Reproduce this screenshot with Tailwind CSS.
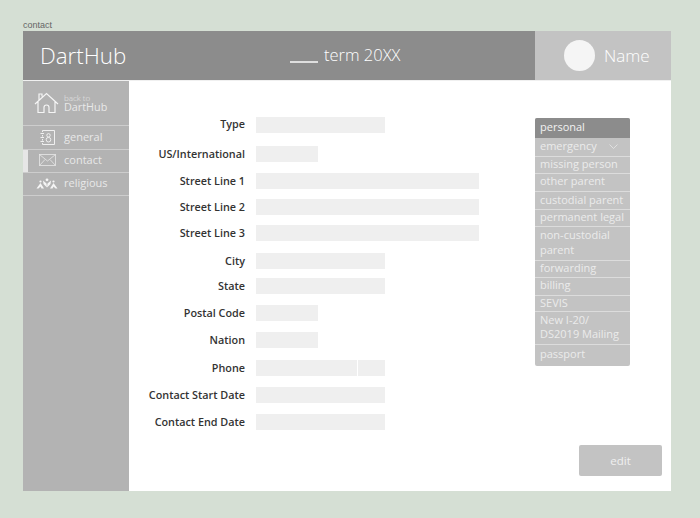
<!DOCTYPE html>
<html><head><meta charset="utf-8"><script src="https://cdn.jsdelivr.net/npm/@tailwindcss/browser@4"></script></head>
<body class="w-[700px] h-[518px] overflow-hidden bg-[#d5dfd4] font-['Open_Sans',sans-serif]">
<div class="h-[31px] pl-[23px] pt-[20px] text-[9px] leading-[11px] text-[#666] font-['Liberation_Sans',sans-serif]">contact</div>
<div class="mx-[23px] w-[648px] h-[460px] flex flex-col bg-white">
  <header class="h-[49px] flex shrink-0">
    <div class="w-[512px] bg-[#8c8c8c] flex items-center">
      <div class="w-[262px] pl-[17px] text-[22.300px] leading-[30px] font-light text-white">DartHub</div>
      <div class="flex items-center text-[16.500px] font-light text-white ml-[5px]"><span class="w-[28px] h-[2px] bg-[#dedede] mt-[13px] mr-[6px]"></span>term 20XX</div>
    </div>
    <div class="flex-1 bg-[#c3c3c3] flex items-center pl-[29px] gap-[9px]">
      <div class="w-[31px] h-[31px] rounded-full bg-[#f5f5f5]"></div>
      <span class="text-[17px] font-light text-white">Name</span>
    </div>
  </header>
  <div class="flex flex-1 border-t border-[#f0f0f0]">
    <aside class="w-[106px] bg-[#b3b3b3] text-[#e8e8e8] flex flex-col">
      <a class="h-[45px] flex items-center pl-[11px] gap-[5px] border-b border-[#cdcdcd]">
        <svg width="25" height="22" viewBox="0 0 25 22" fill="none" stroke="#f5f5f5" stroke-width="1.200"><path d="M1 12 L12.500 1.500 L24 12M4 9.500V20.500H10V15.500a2.500 2.500 0 0 1 5 0V20.500H21V9.500M5 8V2H8V4.500"/></svg>
        <div class="mt-[-1px]"><div class="text-[8px] leading-[7px] font-light">back to</div><div class="text-[10.800px] leading-[11px]">DartHub</div></div>
      </a>
      <a class="h-[24px] flex items-center border-b border-[#cdcdcd] pl-[16px] pb-[1px] text-[11px]">
        <svg width="17" height="17" viewBox="0 0 17 17" fill="none" stroke="#f0f0f0" stroke-width="1"><path d="M3.500 1.500H15.500V15.500H3.500"/><path d="M3.500 1.500V3M3.500 6V7.500M3.500 10V11.500M3.500 14V15.500"/><path d="M1.500 4.500h3.500M1.500 8.500h3.500M1.500 12.500h3.500"/><circle cx="9.500" cy="6.300" r="1.700"/><circle cx="9.500" cy="10.700" r="2.300"/></svg>
        <span class="ml-[8px]">general</span>
      </a>
      <a class="h-[23px] flex items-center border-b border-[#cdcdcd] text-[11px]">
        <span class="w-[5px] self-stretch bg-[#e6e6e6]"></span>
        <svg class="ml-[11px] mb-[2px]" width="17" height="12" viewBox="0 0 17 12" fill="none" stroke="#e8e8e8" stroke-width="0.800"><rect x="0.500" y="0.500" width="16" height="11"/><path d="M.5 .5L8.500 7L16.500 .5M.5 11.500L6 5.500M16.500 11.500L11 5.500"/></svg>
        <span class="ml-[8px] mb-[2px]">contact</span>
      </a>
      <a class="h-[23px] flex items-center border-b border-[#cdcdcd] pl-[13px] text-[11px]">
        <svg class="mb-[2px]" width="22" height="11" viewBox="0 0 22 11" fill="#f5f5f5"><circle cx="11" cy="1.800" r="1.400"/><path d="M7 2.500l3.500 3L11 9.500 7.500 6zM15 2.500l-3.500 3L11 9.500l3.500-3.500z"/><circle cx="4.500" cy="3.500" r="1.100"/><circle cx="17.500" cy="3.500" r="1.100"/><path d="M4.500 5L8 10.500H5.500L4.500 8.500L2.500 10.500H0.500zM17.500 5L21.500 10.500H19.500L17.500 8.500L16.500 10.500H14z"/></svg>
        <span class="ml-[6px] mb-[2px]">religious</span>
      </a>
    </aside>
    <main class="flex-1 relative flex">
      <form class="w-[350px] pt-[36px] text-[10.800px] font-semibold text-[#333]">
        <div class="flex items-center h-[16px] gap-[11px]"><label class="w-[116px] text-right mb-[2px]">Type</label><div class="w-[129px] h-[16px] bg-[#efefef]"></div></div>
        <div class="flex items-center h-[16px] gap-[11px] mt-[13px]"><label class="w-[116px] text-right mt-[1px]">US/International</label><div class="w-[62px] h-[16px] bg-[#efefef]"></div></div>
        <div class="flex items-center h-[16px] gap-[11px] mt-[11px]"><label class="w-[116px] text-right mt-[1px]">Street Line 1</label><div class="w-[223px] h-[16px] bg-[#efefef]"></div></div>
        <div class="flex items-center h-[16px] gap-[11px] mt-[10px]"><label class="w-[116px] text-right">Street Line 2</label><div class="w-[223px] h-[16px] bg-[#efefef]"></div></div>
        <div class="flex items-center h-[16px] gap-[11px] mt-[10px]"><label class="w-[116px] text-right">Street Line 3</label><div class="w-[223px] h-[16px] bg-[#efefef]"></div></div>
        <div class="flex items-center h-[16px] gap-[11px] mt-[12px]"><label class="w-[116px] text-right mt-[1px]">City</label><div class="w-[129px] h-[16px] bg-[#efefef]"></div></div>
        <div class="flex items-center h-[16px] gap-[11px] mt-[9px]"><label class="w-[116px] text-right mt-[1px]">State</label><div class="w-[129px] h-[16px] bg-[#efefef]"></div></div>
        <div class="flex items-center h-[16px] gap-[11px] mt-[11px]"><label class="w-[116px] text-right mt-[1px]">Postal Code</label><div class="w-[62px] h-[16px] bg-[#efefef]"></div></div>
        <div class="flex items-center h-[16px] gap-[11px] mt-[11px]"><label class="w-[116px] text-right">Nation</label><div class="w-[62px] h-[16px] bg-[#efefef]"></div></div>
        <div class="flex items-center h-[16px] gap-[11px] mt-[12px]"><label class="w-[116px] text-right">Phone</label><div class="w-[129px] h-[16px] flex gap-px"><div class="w-[101px] bg-[#efefef]"></div><div class="flex-1 bg-[#efefef]"></div></div></div>
        <div class="flex items-center h-[16px] gap-[11px] mt-[11px]"><label class="w-[116px] text-right">Contact Start Date</label><div class="w-[129px] h-[16px] bg-[#efefef]"></div></div>
        <div class="flex items-center h-[16px] gap-[11px] mt-[11px]"><label class="w-[116px] text-right">Contact End Date</label><div class="w-[129px] h-[16px] bg-[#efefef]"></div></div>
      </form>
      <div class="pl-[56px] pt-[37px]">
        <nav class="w-[95px] rounded-[2px] overflow-hidden bg-[#c3c3c3] text-[11px] leading-[14.500px] text-[#ebebeb]">
          <div class="h-[20px] bg-[#8c8c8c] pl-[5px] pb-[1px] flex items-center text-[#f2f2f2]">personal</div>
          <div class="h-[19px] pl-[5px] pb-[2px] flex items-center justify-between pr-[12px] border-b border-[#dcdcdc]">emergency<svg width="9" height="5" viewBox="0 0 9 5" fill="none" stroke="#ececec" stroke-width="0.700"><path d="M.5 .5L4.500 4.500L8.500 .5"/></svg></div>
          <div class="h-[17px] pl-[5px] pb-[2px] flex items-center border-b border-[#dcdcdc]">missing person</div>
          <div class="h-[18px] pl-[5px] pb-[2px] flex items-center border-b border-[#dcdcdc]">other parent</div>
          <div class="h-[18px] pl-[5px] pb-[1px] flex items-center border-b border-[#dcdcdc]">custodial parent</div>
          <div class="h-[17px] pl-[5px] pb-[2px] flex items-center border-b border-[#dcdcdc]">permanent legal</div>
          <div class="h-[34px] pl-[5px] pb-[2px] flex items-center border-b border-[#dcdcdc]">non-custodial<br>parent</div>
          <div class="h-[17px] pl-[5px] pb-[2px] flex items-center border-b border-[#dcdcdc]">forwarding</div>
          <div class="h-[18px] pl-[5px] pb-[2px] flex items-center border-b border-[#dcdcdc]">billing</div>
          <div class="h-[16px] pl-[5px] flex items-center border-b border-[#dcdcdc]">SEVIS</div>
          <div class="h-[33px] pl-[5px] pb-[2px] flex items-center border-b border-[#dcdcdc]">New I-20/<br>DS2019 Mailing</div>
          <div class="h-[21px] pl-[5px] pb-[3px] flex items-center">passport</div>
        </nav>
      </div>
      <button class="absolute left-[450px] top-[364px] w-[83px] h-[31px] rounded-[2px] bg-[#c3c3c3] text-[11.500px] text-[#f0f0f0]">edit</button>
    </main>
  </div>
</div>
</body></html>
